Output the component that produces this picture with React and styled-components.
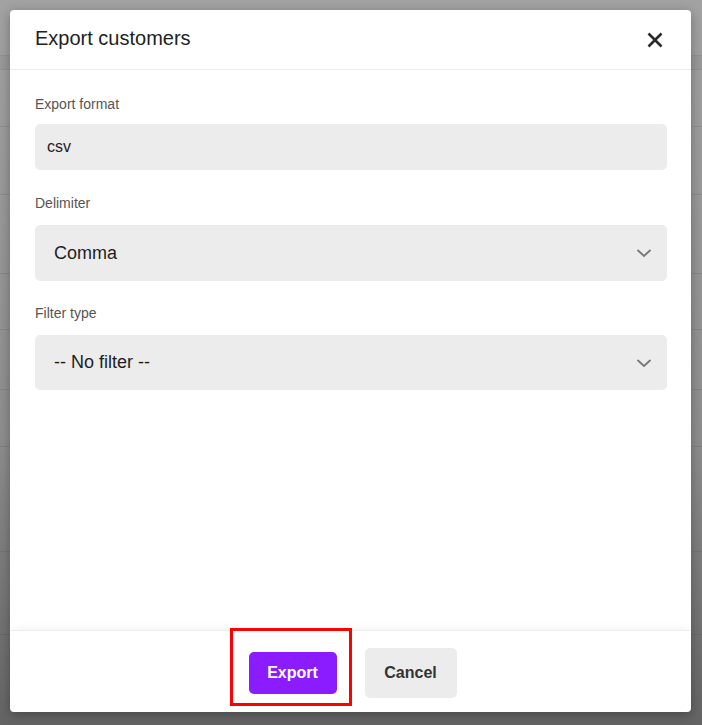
import React from "react";
import styled, { createGlobalStyle } from "styled-components";

const GlobalStyle = createGlobalStyle`
  html, body {
    margin: 0;
    padding: 0;
  }
  body {
    font-family: "Liberation Sans", Arial, sans-serif;
  }
`;

const Page = styled.div`
  position: relative;
  width: 702px;
  height: 725px;
  overflow: hidden;
  background: #ffffff;
`;

// faint table behind the dimmed overlay
const BackTable = styled.div`
  display: flex;
  flex-direction: column;
  width: 100%;
`;

const BackRow = styled.div`
  height: ${(p) => p.h}px;
  border-bottom: 1px solid #e4e4e4;
  background: ${(p) => (p.head ? "#f2f2f2" : "#ffffff")};
`;

const Overlay = styled.div`
  position: absolute;
  inset: 0;
  display: flex;
  align-items: flex-start;
  justify-content: flex-start;
  padding: 10px 11px 13px 10px;
  background: linear-gradient(
    180deg,
    rgba(70, 70, 70, 0.5) 0%,
    rgba(60, 60, 60, 0.58) 60%,
    rgba(40, 40, 40, 0.72) 100%
  );
`;

const Modal = styled.div`
  display: flex;
  flex-direction: column;
  width: 681px;
  height: 702px;
  background: #ffffff;
  border-radius: 4px;
  box-shadow: 0 3px 12px rgba(0, 0, 0, 0.3);
  overflow: hidden;
`;

const Header = styled.div`
  display: flex;
  align-items: center;
  justify-content: space-between;
  height: 59px;
  padding: 0 24px 0 25px;
  border-bottom: 1px solid #ececec;
  flex-shrink: 0;
`;

const Title = styled.h2`
  margin: -2px 0 0;
  font-size: 20px;
  font-weight: 400;
  color: #222222;
`;

const CloseButton = styled.button`
  display: flex;
  align-items: center;
  justify-content: center;
  width: 24px;
  height: 24px;
  padding: 0;
  border: none;
  background: none;
  cursor: pointer;
  color: #2a2a2a;
`;

const Body = styled.div`
  flex: 1;
  display: flex;
  flex-direction: column;
  padding: 26px 24px 0 25px;
`;

const Field = styled.div`
  display: flex;
  flex-direction: column;
  margin-bottom: ${(p) => p.mb || 0}px;
`;

const Label = styled.label`
  font-size: 14px;
  color: #555555;
  line-height: 16px;
  margin-bottom: ${(p) => p.gap}px;
`;

const TextInput = styled.div`
  display: flex;
  align-items: center;
  height: 46px;
  padding: 0 12px;
  background: #ececec;
  border-radius: 5px;
  font-size: 16px;
  color: #222222;
`;

const SelectBox = styled.div`
  display: flex;
  align-items: center;
  justify-content: space-between;
  height: ${(p) => p.h}px;
  padding: 0 15px 0 19px;
  background: #ececec;
  border-radius: 5px;
  font-size: 18px;
  color: #1e1e1e;
`;

const Footer = styled.div`
  display: flex;
  align-items: center;
  justify-content: center;
  gap: 28px;
  height: 82px;
  padding: 2px 0 0 4px;
  box-sizing: border-box;
  border-top: 1px solid #ededed;
  box-shadow: 0 -6px 8px -4px rgba(0, 0, 0, 0.05);
  flex-shrink: 0;
`;

const Highlight = styled.div`
  position: relative;
  display: flex;
`;

const RedBox = styled.span`
  position: absolute;
  top: -24px;
  left: -19px;
  right: -15px;
  bottom: -12px;
  border: 3px solid #ff0000;
  pointer-events: none;
`;

const Button = styled.button`
  height: ${(p) => (p.primary ? 42 : 50)}px;
  width: ${(p) => (p.primary ? 88 : 92)}px;
  border: none;
  border-radius: 5px;
  font-family: "Liberation Sans", Arial, sans-serif;
  font-size: 16px;
  font-weight: 700;
  cursor: pointer;
  background: ${(p) => (p.primary ? "#8a1cff" : "#ececec")};
  color: ${(p) => (p.primary ? "#ffffff" : "#333333")};
`;

const Chevron = () => (
  <svg width="16" height="10" viewBox="0 0 16 10" fill="none">
    <path d="M1.5 2 L8 8 L14.5 2" stroke="#777" strokeWidth="1.8" />
  </svg>
);

const XIcon = () => (
  <svg width="16" height="16" viewBox="0 0 16 16" fill="none">
    <path d="M1.5 1.5 L14.5 14.5 M14.5 1.5 L1.5 14.5" stroke="#2a2a2a" strokeWidth="2.6" />
  </svg>
);

const rows = [
  { h: 55 },
  { h: 13, head: true },
  { h: 56 },
  { h: 67 },
  { h: 78 },
  { h: 55 },
  { h: 59 },
  { h: 56 },
  { h: 104 },
  { h: 82 },
  { h: 90 },
];

export default function App() {
  return (
    <>
      <GlobalStyle />
      <Page>
        <BackTable>
          {rows.map((r, i) => (
            <BackRow key={i} h={r.h} head={r.head} />
          ))}
        </BackTable>
        <Overlay>
          <Modal>
            <Header>
              <Title>Export customers</Title>
              <CloseButton aria-label="Close">
                <XIcon />
              </CloseButton>
            </Header>
            <Body>
              <Field mb={25}>
                <Label gap={12}>Export format</Label>
                <TextInput>csv</TextInput>
              </Field>
              <Field mb={24}>
                <Label gap={14}>Delimiter</Label>
                <SelectBox h={56}>
                  Comma
                  <Chevron />
                </SelectBox>
              </Field>
              <Field>
                <Label gap={14}>Filter type</Label>
                <SelectBox h={55}>
                  -- No filter --
                  <Chevron />
                </SelectBox>
              </Field>
            </Body>
            <Footer>
              <Highlight>
                <RedBox />
                <Button primary>Export</Button>
              </Highlight>
              <Button>Cancel</Button>
            </Footer>
          </Modal>
        </Overlay>
      </Page>
    </>
  );
}
